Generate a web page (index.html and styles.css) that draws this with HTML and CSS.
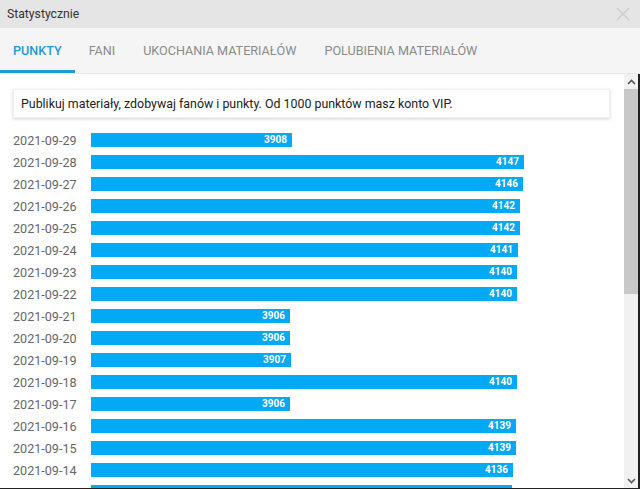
FILE: index.html
```html
<!DOCTYPE html>
<html lang="pl">
<head>
<meta charset="utf-8">
<link rel="stylesheet" href="styles.css">
</head>
<body>
<div class="dialog">
  <div class="titlebar">
    <span class="title">Statystycznie</span>
    <svg class="close" width="14" height="14" viewBox="0 0 14 14"><path d="M1 1L13 13M13 1L1 13" stroke="#cfcfcf" stroke-width="1.6" fill="none"/></svg>
  </div>
  <div class="tabs">
    <div class="tab active">Punkty</div>
    <div class="tab">Fani</div>
    <div class="tab">Ukochania materiałów</div>
    <div class="tab">Polubienia materiałów</div>
  </div>
  <div class="body">
    <div class="content">
      <div class="info">Publikuj materiały, zdobywaj fanów i punkty. Od 1000 punktów masz konto VIP.</div>
      <div class="rows">
        <div class="row"><span class="date">2021-09-29</span><div class="bar" style="width:201px">3908</div></div>
        <div class="row"><span class="date">2021-09-28</span><div class="bar" style="width:433px">4147</div></div>
        <div class="row"><span class="date">2021-09-27</span><div class="bar" style="width:432px">4146</div></div>
        <div class="row"><span class="date">2021-09-26</span><div class="bar" style="width:429px">4142</div></div>
        <div class="row"><span class="date">2021-09-25</span><div class="bar" style="width:429px">4142</div></div>
        <div class="row"><span class="date">2021-09-24</span><div class="bar" style="width:427px">4141</div></div>
        <div class="row"><span class="date">2021-09-23</span><div class="bar" style="width:426px">4140</div></div>
        <div class="row"><span class="date">2021-09-22</span><div class="bar" style="width:426px">4140</div></div>
        <div class="row"><span class="date">2021-09-21</span><div class="bar" style="width:199px">3906</div></div>
        <div class="row"><span class="date">2021-09-20</span><div class="bar" style="width:199px">3906</div></div>
        <div class="row"><span class="date">2021-09-19</span><div class="bar" style="width:200px">3907</div></div>
        <div class="row"><span class="date">2021-09-18</span><div class="bar" style="width:426px">4140</div></div>
        <div class="row"><span class="date">2021-09-17</span><div class="bar" style="width:199px">3906</div></div>
        <div class="row"><span class="date">2021-09-16</span><div class="bar" style="width:425px">4139</div></div>
        <div class="row"><span class="date">2021-09-15</span><div class="bar" style="width:425px">4139</div></div>
        <div class="row"><span class="date">2021-09-14</span><div class="bar" style="width:422px">4136</div></div>
        <div class="row"><span class="date"></span><div class="bar" style="width:421px"></div></div>
      </div>
    </div>
    <div class="scrollbar">
      <div class="arrow"><svg width="9" height="6" viewBox="0 0 9 6"><path d="M1 5L4.5 1.5L8 5" stroke="#555" stroke-width="1.6" fill="none"/></svg></div>
      <div class="track"><div class="thumb"></div></div>
      <div class="arrow"><svg width="9" height="6" viewBox="0 0 9 6"><path d="M1 1L4.5 4.5L8 1" stroke="#555" stroke-width="1.6" fill="none"/></svg></div>
    </div>
  </div>
</div>
</body>
</html>
```
FILE: styles.css
```css
* { box-sizing: border-box; }
html, body { margin: 0; padding: 0; }
body {
  width: 640px;
  height: 489px;
  overflow: hidden;
  font-family: Roboto, "Noto Sans", sans-serif;
  background: #fff;
}
.dialog {
  display: flex;
  flex-direction: column;
  height: 489px;
  border-bottom: 1px solid #222;
}
.titlebar {
  height: 28px;
  flex: none;
  background: #e5e5e5;
  display: flex;
  align-items: center;
  justify-content: space-between;
  padding: 0 10px 0 7px;
}
.title {
  font-size: 12.2px;
  font-weight: 400;
  color: #333;
}
.close { display: block; }
.tabs {
  height: 46px;
  flex: none;
  background: #f5f5f5;
  display: flex;
  border-bottom: 1px solid #e8e8e8;
}
.tab {
  padding: 3px 14px 0;
  font-size: 12.6px;
  font-weight: 400;
  text-transform: uppercase;
  color: #8a8a8a;
  display: flex;
  align-items: center;
  border-bottom: 3px solid transparent;
}
.tab:first-child { padding-left: 13px; padding-right: 13px; }
.tab.active {
  color: #1d9bd6;
  font-weight: 500;
  border-bottom-color: #1d9bd6;
}
.body {
  flex: 1;
  display: flex;
  min-height: 0;
  border-right: 2px solid #222;
}
.content {
  flex: 1;
  overflow: hidden;
  padding: 15px 14px 0 13px;
}
.info {
  height: 29px;
  background: #fff;
  box-shadow: 0 1px 3px rgba(0,0,0,0.18);
  border: 1px solid #f0f0f0;
  font-size: 12.4px;
  color: #222;
  display: flex;
  align-items: center;
  padding-left: 7px;
}
.rows {
  margin-top: 15px;
  display: flex;
  flex-direction: column;
  gap: 8px;
}
.row {
  display: flex;
  align-items: center;
  height: 14px;
}
.date {
  width: 78px;
  flex: none;
  font-size: 12.6px;
  color: #666;
}
.bar {
  height: 14px;
  background: #03a9f4;
  color: #fff;
  font-size: 10px;
  font-weight: 700;
  text-align: right;
  padding-right: 5px;
  line-height: 14px;
}
.scrollbar {
  width: 14px;
  flex: none;
  background: #f1f1f1;
  display: flex;
  flex-direction: column;
}
.arrow {
  height: 15px;
  display: flex;
  align-items: center;
  justify-content: center;
  flex: none;
}
.track {
  flex: 1;
}
.thumb {
  height: 205px;
  background: #c8c8c8;
}
```
